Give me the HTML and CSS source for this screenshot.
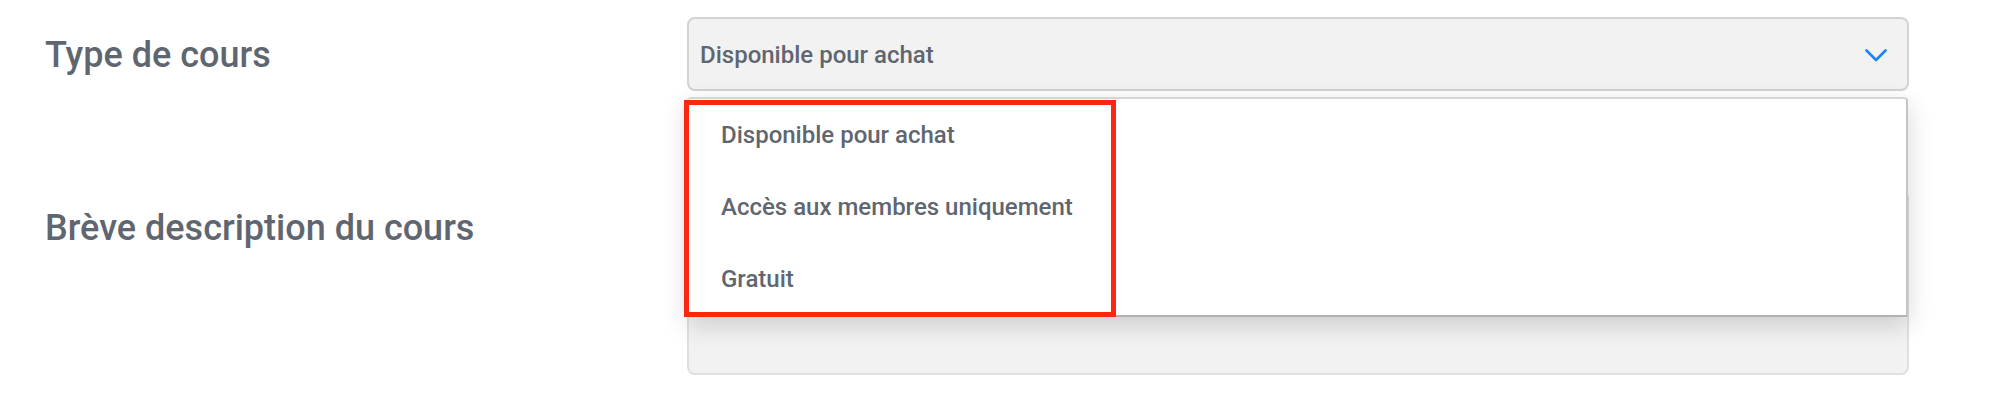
FILE: index.html
```html
<!DOCTYPE html>
<html lang="fr">
<head>
<meta charset="utf-8">
<title>Type de cours</title>
<link rel="stylesheet" href="styles.css">
</head>
<body>
<form class="form">
  <div class="row row-select">
    <label class="label">Type de cours</label>
    <div class="field">
      <div class="select">
        <span class="select-value">Disponible pour achat</span>
        <svg class="chevron" width="22" height="13" viewBox="0 0 22 13" aria-hidden="true">
          <path d="M1.5 1.5 L11 11 L20.5 1.5" fill="none" stroke="#1a85ff" stroke-width="2.6" stroke-linecap="round" stroke-linejoin="round"/>
        </svg>
      </div>
      <ul class="dropdown">
        <li class="option">Disponible pour achat</li>
        <li class="option">Accès aux membres uniquement</li>
        <li class="option">Gratuit</li>
      </ul>
      <div class="highlight"></div>
    </div>
  </div>
  <div class="row row-text">
    <label class="label label-top">Brève description du cours</label>
    <div class="field">
      <div class="textarea"></div>
    </div>
  </div>
</form>
</body>
</html>
```
FILE: styles.css
```css
html, body {
  margin: 0;
  padding: 0;
  background: #ffffff;
}
body {
  font-family: Roboto, "Noto Sans", "Liberation Sans", sans-serif;
  color: #5f6670;
  width: 2014px;
  height: 412px;
  overflow: hidden;
}
.form {
  display: flex;
  flex-direction: column;
  gap: 99px;
  padding: 17px 105px 0 45px;
}
.row {
  display: flex;
}
.row-select {
  align-items: center;
}
.row-text {
  align-items: flex-start;
}
.label {
  width: 642px;
  flex: none;
  font-size: 36px;
  font-weight: 500;
  line-height: 42px;
  color: #5f6670;
  padding-top: 2px;
}
.label-top {
  padding-top: 17px;
}
.field {
  position: relative;
  flex: 1;
}
.select {
  box-sizing: border-box;
  height: 74px;
  border: 2px solid #d3d3d3;
  border-radius: 8px;
  background: #f2f2f2;
  display: flex;
  align-items: center;
  justify-content: space-between;
  padding: 0 20px 0 11px;
}
.select-value {
  font-size: 24px;
  font-weight: 500;
  color: #5f6670;
  padding-top: 2px;
}
.chevron {
  display: block;
  margin-top: 2px;
}
.dropdown {
  position: absolute;
  left: 0;
  right: 1px;
  top: 80px;
  margin: 0;
  padding: 0;
  list-style: none;
  background: #ffffff;
  border-style: solid;
  border-width: 2px 2px 2px 2px;
  border-color: #d6d6d6 #c4c4c4 #b2b2b2 #dcdcdc;
  border-radius: 4px 4px 2px 2px;
  box-shadow: 0 8px 26px rgba(0, 0, 0, 0.16);
  z-index: 2;
}
.option {
  height: 72px;
  display: flex;
  align-items: center;
  padding-left: 32px;
  font-size: 24px;
  font-weight: 500;
  color: #5f6670;
}
.highlight {
  position: absolute;
  left: -3px;
  top: 83px;
  width: 432px;
  height: 217px;
  box-sizing: border-box;
  border: 5px solid #fd2612;
  z-index: 3;
}
.textarea {
  box-sizing: border-box;
  height: 185px;
  border: 2px solid #e0e0e0;
  border-radius: 8px;
  background: #f2f2f2;
}
```
